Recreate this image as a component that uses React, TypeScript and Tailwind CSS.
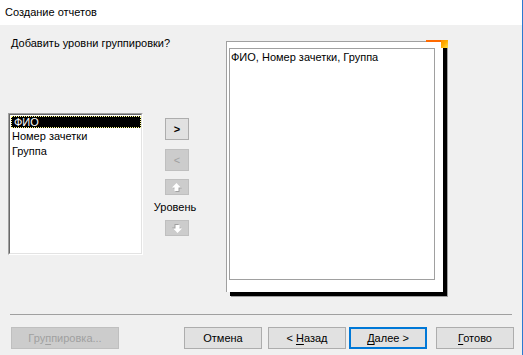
import React from "react";

const font = { fontFamily: '"Liberation Sans", Arial, sans-serif' };

function UpArrow({ down = false }: { down?: boolean }) {
  const pts = "4.5,0 9,4.5 6.5,4.5 6.5,8 2.5,8 2.5,4.5 0,4.5";
  return (
    <svg width="10" height="9" viewBox="0 0 10 9" className={down ? "rotate-180" : ""}>
      <polygon points={pts} transform="translate(1,1)" fill="#a0a0a0" />
      <polygon points={pts} fill="#ffffff" />
    </svg>
  );
}

function WizButton({
  label,
  under,
  disabled,
  focused,
  className = "",
}: {
  label: string;
  under?: number;
  disabled?: boolean;
  focused?: boolean;
  className?: string;
}) {
  const text =
    under === undefined ? (
      label
    ) : (
      <>
        {label.slice(0, under)}
        <span className="underline underline-offset-2">{label[under]}</span>
        {label.slice(under + 1)}
      </>
    );
  return (
    <button
      type="button"
      className={
        "flex h-[22px] items-center justify-center text-[11px] " +
        (disabled
          ? "border border-[#bfbfbf] bg-[#cccccc] text-[#a0a0a0] "
          : focused
            ? "border-2 border-[#0078d7] bg-[#e1e1e1] text-black "
            : "border border-[#adadad] bg-[#e1e1e1] text-black ") +
        className
      }
    >
      <span className="whitespace-pre">{text}</span>
    </button>
  );
}

export default function App() {
  return (
    <div
      className="flex h-[355px] w-[523px] flex-col overflow-hidden border-r border-[#2b79d0] bg-[#f0f0f0] text-[11px] text-black"
      style={font}
    >
      {/* заголовок окна */}
      <div className="flex h-[25px] shrink-0 items-center bg-white pl-[5px] text-[11px]">Создание отчетов</div>

      <div className="flex h-[289px] shrink-0">
        <div className="ml-[8px] flex flex-col">
          <div className="ml-[3px] mt-[11px] leading-[14px]">Добавить уровни группировки?</div>
          <div className="mt-[63px] flex">
            <div className="h-[142px] w-[135px] border border-[#a0a0a0] border-b-white border-r-white">
              <div className="h-full w-full border border-[#696969] border-b-[#e3e3e3] border-r-[#e3e3e3] bg-white pt-px">
                <div className="ml-px h-[12px] border border-dotted border-[#ffff90] bg-black pl-[2px] leading-[10px] text-white">
                  ФИО
                </div>
                <div className="mt-[1px] h-[15px] pl-[2px] leading-[15px]">Номер зачетки</div>
                <div className="h-[15px] pl-[2px] leading-[15px]">Группа</div>
              </div>
            </div>
            <div className="ml-[9px] flex w-[46px] flex-col">
              <WizButton label=">" className="ml-[13px] mt-[5px] h-[21px] w-[24px] font-bold" />
              <WizButton label="<" disabled className="ml-[13px] mt-[9px] h-[20px] w-[24px]" />
              <button
                type="button"
                className="ml-[13px] mt-[8px] flex h-[16px] w-[24px] items-center justify-center border border-[#bfbfbf] bg-[#cccccc]"
              >
                <UpArrow />
              </button>
              <div className="mt-[5px] text-center leading-[14px]">Уровень</div>
              <button
                type="button"
                className="ml-[13px] mt-[6px] flex h-[16px] w-[24px] items-center justify-center border border-[#bfbfbf] bg-[#cccccc]"
              >
                <UpArrow down />
              </button>
            </div>
          </div>
        </div>

        {/* образец отчета */}
        <div className="relative ml-[28px] mt-[16px] h-[251px] w-[217px] border-l border-t border-[#a0a0a0] bg-white pl-[2px] pt-[6px] shadow-[4px_4px_0_0_#000,5px_5px_0_0_#a0a0a0]">
          <div className="h-[232px] w-[206px] border border-[#a0a0a0] bg-white pl-px pt-px leading-[14px]">
            ФИО, Номер зачетки, Группа
          </div>
          <div className="absolute right-[-1px] top-[-2px] h-[2px] w-[18px] bg-[#ff6a00]" />
          <div className="absolute right-[-5px] top-[-2px] h-[8px] w-[7px] bg-gradient-to-br from-[#ff8c00] via-[#ffb000] to-[#ffe040]" />
        </div>
      </div>

      <div className="mx-[10px] h-px bg-[#a0a0a0]" />

      <div className="mt-[12px] flex">
        <WizButton label="Группировка..." under={3} disabled className="ml-[11px] w-[108px]" />
        <WizButton label="Отмена" className="ml-[65px] w-[78px]" />
        <WizButton label="< Назад" under={2} className="ml-[6px] w-[78px]" />
        <WizButton label="Далее >" under={0} focused className="ml-[3px] w-[78px]" />
        <WizButton label="Готово" under={0} className="ml-[9px] w-[78px]" />
      </div>
    </div>
  );
}
